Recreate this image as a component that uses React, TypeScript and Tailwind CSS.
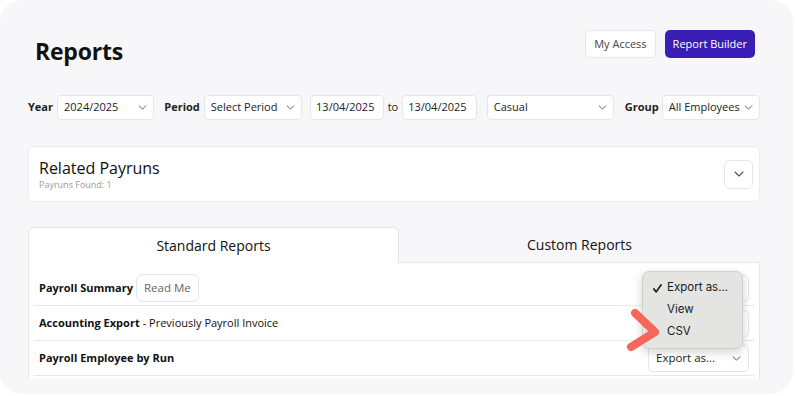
import React from 'react';

const font = { fontFamily: '"Open Sans", "Noto Sans", sans-serif' };

function Chevron({ className = '' }: { className?: string }) {
  return (
    <svg viewBox="0 0 10 6" className={className} fill="none" stroke="currentColor" strokeWidth="1.1" strokeLinecap="round" strokeLinejoin="round">
      <path d="M1 1l4 4 4-4" />
    </svg>
  );
}

function FakeSelect({ value, width }: { value: string; width: string }) {
  return (
    <div className={`${width} h-[25px] bg-white border border-[#e6e6e9] rounded-[4px] pl-[6px] pr-[6px] flex items-center justify-between text-[11px] text-[#222]`}>
      <span className="truncate">{value}</span>
      <Chevron className="w-[9px] h-[5px] text-[#555] shrink-0 ml-1" />
    </div>
  );
}

function ExportSelect() {
  return (
    <div className="w-[101px] h-[27px] bg-white border border-[#e6e6e9] rounded-[5px] pl-[7px] pr-[7px] flex items-center justify-between text-[11.5px] text-[#222]">
      <span>Export as...</span>
      <Chevron className="w-[9px] h-[5px] text-[#444]" />
    </div>
  );
}

const rows = [
  { name: 'Payroll Summary', readMe: true },
  { name: 'Accounting Export', extra: '- Previously Payroll Invoice' },
  { name: 'Payroll Employee by Run' },
  { name: 'Payroll Activity' },
];

export default function App() {
  return (
    <div className="w-[795px] h-[396px] bg-white" style={font}>
      <div className="relative w-[793px] h-[394px] rounded-[22px] bg-[#f7f7f9] overflow-hidden pb-[15px]">
        <div className="h-[379px] overflow-hidden pl-[28px] pr-[33px] pt-[30px]">
          {/* Header */}
          <div className="flex items-start justify-between pl-[7px] pr-[5px]">
            <h1 className="text-[23px] font-bold text-[#111] leading-[30px] mt-[6px] tracking-[-0.2px]">Reports</h1>
            <div className="flex items-center gap-[9px]">
              <button className="h-[28px] px-[8px] bg-white border border-[#e6e6e9] rounded-[5px] text-[11px] text-[#444]">My Access</button>
              <button className="h-[28px] px-[8px] bg-[#3a1db5] rounded-[5px] text-[11px] text-white">Report Builder</button>
            </div>
          </div>

          {/* Filters */}
          <div className="flex items-center mt-[29px] text-[11px] text-[#222]">
            <span className="font-bold mr-[4px]">Year</span>
            <FakeSelect value="2024/2025" width="w-[99px]" />
            <span className="font-bold ml-[10px] mr-[4px]">Period</span>
            <FakeSelect value="Select Period" width="w-[100px]" />
            <div className="ml-[8px] w-[75px] h-[25px] bg-white border border-[#e6e6e9] rounded-[4px] pl-[5px] flex items-center">13/04/2025</div>
            <span className="mx-[4px]">to</span>
            <div className="w-[76px] h-[25px] bg-white border border-[#e6e6e9] rounded-[4px] pl-[5px] flex items-center">13/04/2025</div>
            <div className="ml-[10px]">
              <FakeSelect value="Casual" width="w-[127px]" />
            </div>
            <span className="font-bold ml-[11px] mr-[3px]">Group</span>
            <FakeSelect value="All Employees" width="w-[100px]" />
          </div>

          {/* Related payruns */}
          <div className="mt-[26px] h-[56px] bg-white border border-[#ececef] rounded-[6px] pl-[10px] pr-[6px] flex items-center justify-between">
            <div className="flex flex-col">
              <span className="text-[16px] text-[#111] leading-[20px]">Related Payruns</span>
              <span className="text-[9px] text-[#999] leading-[13px]">Payruns Found: 1</span>
            </div>
            <button className="w-[29px] h-[29px] bg-white border border-[#e6e6e9] rounded-[6px] flex items-center justify-center">
              <Chevron className="w-[10px] h-[6px] text-[#555]" />
            </button>
          </div>

          {/* Tabs */}
          <div className="mt-[25px] flex h-[36px]">
            <div className="w-[371px] bg-white border border-b-0 border-[#e6e6e9] rounded-t-[6px] flex items-center justify-center text-[14px] text-[#111]">
              Standard Reports
            </div>
            <div className="flex-1 border-b border-[#e6e6e9] flex items-center justify-center text-[14px] text-[#111]">
              Custom Reports
            </div>
          </div>
          <div className="bg-white border-x border-[#e6e6e9] px-[5px] pt-[8px]">
            {rows.map((r) => (
              <div key={r.name} className="flex items-center justify-between py-[3px] border-b border-[#e8e8ea] pl-[5px] pr-[5px]">
                <div className="flex items-center gap-[3px] h-[28px] text-[11px] text-[#111]">
                  <span className="font-bold">{r.name}</span>
                  {r.extra && <span>{r.extra}</span>}
                  {r.readMe && (
                    <span className="h-[28px] px-[7px] border border-[#e6e6e9] rounded-[6px] flex items-center text-[11.5px] text-[#666]">Read Me</span>
                  )}
                </div>
                <ExportSelect />
              </div>
            ))}
          </div>
        </div>

        {/* Native dropdown menu */}
        <div className="absolute left-[642px] top-[271px] w-[101px] h-[78px] rounded-[7px] bg-[#e4e4e3] border border-[#cfcfcf] shadow-[0_3px_10px_rgba(0,0,0,0.18)] text-[11.5px] text-[#1a1a1a] pt-[5px]" style={{ fontFamily: 'Inter, "Liberation Sans", sans-serif' }}>
          <div className="relative h-[22px] flex items-center pl-[24px]">
            <svg viewBox="0 0 12 12" className="absolute left-[9px] top-[6px] w-[11px] h-[11px]" fill="none" stroke="#1a1a1a" strokeWidth="1.8" strokeLinecap="round" strokeLinejoin="round">
              <path d="M2 6.5l2.6 3.2L10 2" />
            </svg>
            Export as...
          </div>
          <div className="h-[22px] flex items-center pl-[24px]">View</div>
          <div className="h-[22px] flex items-center pl-[24px]">CSV</div>
        </div>

        {/* Annotation arrow */}
        <svg className="absolute left-[624px] top-[306px] w-[40px] h-[48px]" viewBox="0 0 40 48" fill="none">
          <path d="M11 7 L31 26 L7 41" stroke="#f6665b" strokeWidth="8" strokeLinecap="round" strokeLinejoin="round" />
        </svg>
      </div>
    </div>
  );
}
